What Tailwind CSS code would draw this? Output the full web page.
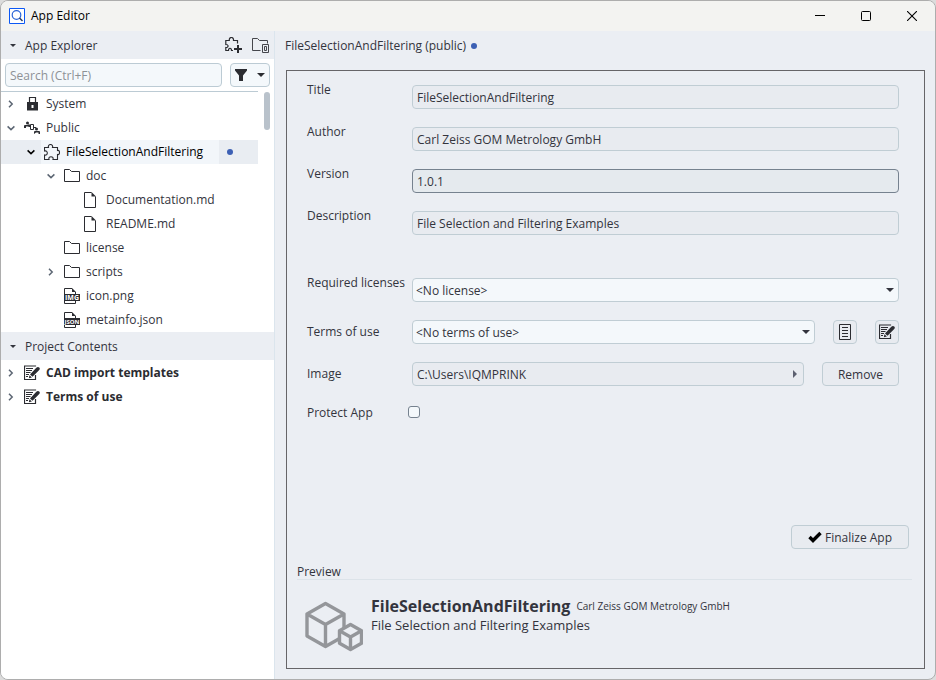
<!DOCTYPE html>
<html lang="en">
<head>
<meta charset="utf-8">
<meta name="viewport" content="width=device-width, initial-scale=1">
<title>App Editor</title>
<script src="https://cdn.jsdelivr.net/npm/@tailwindcss/browser@4"></script>
</head>
<body class="bg-[#dcdcdc]">
<svg class="hidden" aria-hidden="true">
  <symbol id="right" viewBox="0 0 8 8"><path d="M2 .8 5.2 4 2 7.2" fill="none" stroke="currentColor" stroke-width="1.5"/></symbol>
  <symbol id="down" viewBox="0 0 8 8"><path d="M.6 2.4 4 5.6 7.4 2.4" fill="none" stroke="currentColor" stroke-width="1.5"/></symbol>
  <symbol id="caret" viewBox="0 0 8 4"><path d="M0 0h8L4 4z" fill="currentColor"/></symbol>
  <symbol id="folder" viewBox="0 0 16 16"><path d="M.5 13.5v-12h5l2 2h8v10z" fill="none" stroke="currentColor"/></symbol>
  <symbol id="file" viewBox="0 0 16 16"><path d="M9.500 .5h-7v15h11V4.500" fill="none" stroke="currentColor"/><path d="M9.500 0v4.500H14z" fill="currentColor"/></symbol>
  <symbol id="puzzle" viewBox="0 0 16 16"><path d="M.5 3.500H4.500C4 2 4.700 .5 6.500 .5S9 2 8.500 3.500H13.500V6.500C15 6 15.500 7.200 15.500 8.500S15 11 13.500 10.500V15.500H9C9.500 13.600 8.500 12.800 7 12.800S4.500 13.600 5 15.500H.5V11C2.500 11.500 3.300 10.200 3.300 9S2.500 6.500 .5 7Z" fill="none" stroke="currentColor" stroke-width="1.100"/></symbol>
  <symbol id="edit" viewBox="0 0 16 16"><path d="M11.500 1.500V1H.5v13.500h11V10" fill="none" stroke="currentColor" stroke-width="1.200"/><path d="M2 3.500h7M2 5.500h6M2 7.500h4.500M2 9.500h3M2 11.500h2" stroke="currentColor" fill="none"/><path d="m6 9.500 6.300-6.800Q14 1.200 15.200 2.500q1.300 1.200-.2 2.700L8.500 11.800z" fill="currentColor"/><path d="m5.400 10.200 2.500 2.300-3 .8z" fill="currentColor"/></symbol>
</svg>
<div class="flex h-screen flex-col overflow-hidden rounded-lg border border-[#adadad] bg-[#ebeef3] font-['Open_Sans',sans-serif] text-xs leading-4 text-[#33343d]">
  <header class="flex h-[30px] shrink-0 items-center bg-[#f3f3f1] pl-2 text-black">
    <svg class="size-4" viewBox="0 0 16 16" fill="none"><path d="M.5.5h15v15H.5z" fill="#fff" stroke="#0c58f5"/><circle cx="7.500" cy="7" r="4.300" stroke="#2a65d8" stroke-width="1.200"/><path d="m10.500 10 3 3" stroke="#2a3a5a" stroke-width="1.400"/></svg>
    <h1 class="ml-[6px] flex-1">App Editor</h1>
    <button aria-label="Minimize" class="flex h-full w-[46px] items-center justify-center"><svg class="size-[10px]" viewBox="0 0 10 10"><path d="M0 4.500h10" stroke="#000"/></svg></button>
    <button aria-label="Maximize" class="flex h-full w-[46px] items-center justify-center"><svg class="size-[10px]" viewBox="0 0 10 10"><rect x=".5" y=".5" width="9" height="9" rx="1" fill="none" stroke="#000"/></svg></button>
    <button aria-label="Close" class="flex h-full w-[46px] items-center justify-center"><svg class="size-[10px]" viewBox="0 0 10 10"><path d="m0 0 10 10M10 0 0 10" stroke="#000" stroke-width="1.100"/></svg></button>
  </header>
  <div class="flex min-h-0 flex-1">
    <aside class="flex w-[274px] shrink-0 flex-col border-r border-[#dbe5ed] bg-white">
      <div class="flex h-7 shrink-0 items-center bg-[#ebeef3] pl-[9px] pr-[5px]">
        <svg class="h-[3px] w-[6px]"><use href="#caret"/></svg>
        <h2 class="ml-[9px] flex-1 pt-px">App Explorer</h2>
        <button aria-label="Create app" class="mr-[9px]"><svg class="h-4 w-[18px]" viewBox="0 0 18 16" fill="none"><path d="M8 13.500H6.500c0-3-3-3-3 0H.8v-3c3 .3 3-3.300 0-3V3.500h3.500C3.800-.5 9-.5 8.500 3.500H12.500V6.500" stroke="#2b2c31" stroke-width="1.200"/><path d="M13 8v8M9 12h8" stroke="#2b2c31" stroke-width="2"/></svg></button>
        <button aria-label="Create folder"><svg class="h-4 w-[17px]" viewBox="0 0 17 16" fill="none" stroke="#45464c"><path d="M8.500 13.500h-8v-12h5l2 2h8v3"/><path d="M10.500 7.500h6v8h-6zM12.500 9.500h2v4h-2z"/></svg></button>
      </div>
      <div class="flex shrink-0 gap-2 px-1 py-1">
        <input type="search" aria-label="Search" placeholder="Search (Ctrl+F)" class="h-6 min-w-0 flex-1 rounded border border-[#bccbd4] bg-[#f4f8fb] px-1 outline-none placeholder:text-[#8d9196]">
        <button aria-label="Filter" class="flex h-6 w-10 items-center justify-between rounded border border-[#bccbd4] bg-[#f4f8fb] pl-1 pr-1 text-[#2b2c31]">
          <svg class="h-3 w-3" viewBox="0 0 12 12"><path d="M0 0h12v1.500L8 6.500V12H4V6.500L0 1.500z" fill="currentColor"/></svg>
          <svg class="h-1 w-2"><use href="#caret"/></svg>
        </button>
      </div>
      <div class="flex h-[241px] shrink-0 justify-between pr-1">
        <ul class="w-[257px] border-t border-[#bccbd4] [&>li]:flex [&>li]:h-6 [&>li]:items-center">
          <li class="pl-[6px]"><svg class="size-2 text-[#5c6673]"><use href="#right"/></svg><svg class="ml-[9px] mr-[6px] size-4 text-[#2b2c31]" viewBox="0 0 16 16"><path d="M5.500 6.500V1.500h6v5" fill="none" stroke="currentColor" stroke-width="1.200"/><path d="M3 6h11v8.500H3zM7.500 9v3h2V9z" fill="currentColor" fill-rule="evenodd"/></svg>System</li>
          <li class="pl-[6px]"><svg class="size-2 text-[#5c6673]"><use href="#down"/></svg><svg class="ml-[9px] mr-[6px] size-4 text-[#2b2c31]" viewBox="0 0 16 16"><circle cx="3.500" cy="3" r="1.500" fill="currentColor"/><path d="M0 8V6q0-1 1-1h4q1 0 1 1v1H4.500V6.500H2V8zM10 14v-2q0-1 1-1h4q1 0 1 1v2h-1.500v-1.500H12zM4 4.500h2v1H4zM9 7h3v1H9z" fill="currentColor"/><path d="M6.500 4.500h3v5h-3z" fill="none" stroke="currentColor"/><circle cx="12.500" cy="9" r="1.500" fill="currentColor"/></svg>Public</li>
          <li class="bg-[#e9edf2] pl-[26px] text-black"><svg class="size-2"><use href="#down"/></svg><div class="ml-[6px] flex h-full w-[178px] items-center bg-[#f2f6fa] pl-[3px]"><svg class="size-4 text-[#2b2c31]"><use href="#puzzle"/></svg><span class="ml-[6px]">FileSelectionAndFiltering</span></div><span class="ml-2 size-[6px] rounded-full bg-[#3c60b4]"></span></li>
          <li class="pl-[46px]"><svg class="size-2 text-[#5c6673]"><use href="#down"/></svg><svg class="ml-[9px] mr-[6px] size-4 text-[#2b2c31]"><use href="#folder"/></svg>doc</li>
          <li class="pl-[81px]"><svg class="mr-2 size-4 text-[#2b2c31]"><use href="#file"/></svg>Documentation.md</li>
          <li class="pl-[81px]"><svg class="mr-2 size-4 text-[#2b2c31]"><use href="#file"/></svg>README.md</li>
          <li class="pl-[63px]"><svg class="mr-[6px] size-4 text-[#2b2c31]"><use href="#folder"/></svg>license</li>
          <li class="pl-[46px]"><svg class="size-2 text-[#5c6673]"><use href="#right"/></svg><svg class="ml-[9px] mr-[6px] size-4 text-[#2b2c31]"><use href="#folder"/></svg>scripts</li>
          <li class="pl-[63px]"><svg class="mr-[6px] size-4 text-[#2b2c31]" viewBox="0 0 16 16"><path d="M8 .5H.5v15h11V4" fill="none" stroke="currentColor"/><path d="M8 0v4h4zM0 6h16v7H0z" fill="currentColor"/><text x="8" y="12" text-anchor="middle" font-size="7" font-weight="700" fill="#fff">IMG</text></svg>icon.png</li>
          <li class="pl-[63px]"><svg class="mr-[6px] size-4 text-[#2b2c31]" viewBox="0 0 16 16"><path d="M8 .5H.5v15h11V4" fill="none" stroke="currentColor"/><path d="M8 0v4h4zM0 6h16v7H0z" fill="currentColor"/><text x="8" y="11.700" text-anchor="middle" font-size="6" font-weight="700" fill="#fff">JSON</text></svg>metainfo.json</li>
        </ul>
        <div class="mt-px h-[38px] w-[6px] rounded-full bg-[#b9c2cb]"></div>
      </div>
      <div class="flex h-7 shrink-0 items-center bg-[#ebeef3] pl-[9px]">
        <svg class="h-[3px] w-[6px]"><use href="#caret"/></svg>
        <h2 class="ml-[9px] pt-px">Project Contents</h2>
      </div>
      <ul class="pt-px font-bold text-[#2b2c31] [&>li]:flex [&>li]:h-6 [&>li]:items-center [&>li]:pl-[6px]">
        <li><svg class="size-2 text-[#5c6673]"><use href="#right"/></svg><svg class="ml-[9px] mr-[6px] size-4"><use href="#edit"/></svg>CAD import templates</li>
        <li><svg class="size-2 text-[#5c6673]"><use href="#right"/></svg><svg class="ml-[9px] mr-[6px] size-4"><use href="#edit"/></svg>Terms of use</li>
      </ul>
    </aside>
    <main class="flex min-w-0 flex-1 flex-col pb-[10px] pl-[11px] pr-[10px]">
      <div class="-ml-px flex h-[39px] shrink-0 items-center gap-[5px] pb-[9px]">
        <h2>FileSelectionAndFiltering (public)</h2><span class="size-[6px] rounded-full bg-[#3c60b4]"></span>
      </div>
      <form class="flex min-h-0 flex-1 flex-col border border-[#666568] pt-[11px]">
        <div class="flex flex-col gap-[15px] pl-5 pr-[25px]">
          <div class="flex items-start"><label for="title" class="w-[105px] shrink-0">Title</label><input id="title" readonly value="FileSelectionAndFiltering" class="mt-[3px] h-6 min-w-0 flex-1 rounded border border-[#c0cdd4] bg-[#e8ebf0] px-1 pt-px outline-none"></div>
          <div class="flex items-start"><label for="author" class="w-[105px] shrink-0">Author</label><input id="author" readonly value="Carl Zeiss GOM Metrology GmbH" class="mt-[3px] h-6 min-w-0 flex-1 rounded border border-[#c0cdd4] bg-[#e8ebf0] px-1 pt-px outline-none"></div>
          <div class="flex items-start"><label for="version" class="w-[105px] shrink-0">Version</label><input id="version" readonly value="1.0.1" class="mt-[3px] h-6 min-w-0 flex-1 rounded border border-[#76828f] bg-[#e5eaee] px-1 pt-px outline-none"></div>
          <div class="flex items-start"><label for="description" class="w-[105px] shrink-0">Description</label><input id="description" readonly value="File Selection and Filtering Examples" class="mt-[3px] h-6 min-w-0 flex-1 rounded border border-[#c0cdd4] bg-[#e8ebf0] px-1 pt-px outline-none"></div>
        </div>
        <div class="mt-10 flex flex-col gap-[18px] pl-5 pr-[25px]">
          <div class="flex items-start"><label for="licenses" class="w-[105px] shrink-0">Required licenses</label>
            <div class="relative mt-[3px] min-w-0 flex-1"><select id="licenses" class="block h-6 w-full appearance-none rounded border border-[#c0cdd4] bg-[#f4f8fb] px-[3px] pt-px outline-none"><option>&lt;No license&gt;</option></select><svg class="pointer-events-none absolute right-[5px] top-[10px] h-1 w-2"><use href="#caret"/></svg></div>
          </div>
          <div class="flex items-center"><label for="terms" class="w-[105px] shrink-0 pb-px">Terms of use</label>
            <div class="relative min-w-0 flex-1"><select id="terms" class="block h-6 w-full appearance-none rounded border border-[#c0cdd4] bg-[#f4f8fb] px-[3px] pt-px outline-none"><option>&lt;No terms of use&gt;</option></select><svg class="pointer-events-none absolute right-[5px] top-[10px] h-1 w-2"><use href="#caret"/></svg></div>
            <button type="button" aria-label="View terms" class="ml-[18px] flex size-6 items-center justify-center rounded border border-[#c0cdd4] bg-[#e8ebf0] text-[#2b2c31]"><svg class="size-4" viewBox="0 0 16 16" fill="none" stroke="currentColor"><path d="M2.500.5h11v15h-11zM5 3.500h6M5 6.500h6M5 9.500h6M5 12.500h6"/></svg></button>
            <button type="button" aria-label="Edit terms" class="ml-[18px] flex size-6 items-center justify-center rounded border border-[#c0cdd4] bg-[#e8ebf0] text-[#2b2c31]"><svg class="size-4"><use href="#edit"/></svg></button>
          </div>
          <div class="flex items-center"><label for="image" class="w-[105px] shrink-0 pb-px">Image</label>
            <div class="relative min-w-0 flex-1"><input id="image" readonly value="C:\Users\IQMPRINK" class="block h-6 w-full rounded border border-[#c0cdd4] bg-[#e8ebf0] px-1 pt-px outline-none"><svg class="pointer-events-none absolute right-[7px] top-2 h-2 w-1" viewBox="0 0 4 8"><path d="M0 0v8l4-4z" fill="#5c6070"/></svg></div>
            <button type="button" class="ml-[18px] h-6 w-[77px] rounded border border-[#c0cdd4] bg-[#e8ebf0] pt-px">Remove</button>
          </div>
          <div class="flex items-start"><label for="protect" class="w-[101px] shrink-0 pt-px">Protect App</label><input id="protect" type="checkbox" class="mt-[2px] size-3 appearance-none rounded-[3px] border border-[#76828f] bg-[#f4f8fb]"></div>
        </div>
        <div class="flex-1"></div>
        <button type="button" class="mr-[15px] flex h-6 w-[118px] shrink-0 items-center justify-center gap-[3px] self-end rounded border border-[#c0cdd4] bg-[#e8ebf0]"><svg class="h-3 w-[14px]" viewBox="0 0 14 12"><path d="m1.500 6 3.500 3.500L12.500 2" fill="none" stroke="#000" stroke-width="3.400"/></svg><span class="pt-px">Finalize App</span></button>
        <section class="mt-4 shrink-0 pl-[10px] pr-3">
          <h3 class="border-b border-[#dce3e9] leading-[14px]">Preview</h3>
          <div class="flex h-[88px] pl-2 pt-[21px]">
            <svg class="h-[52px] w-[58px] shrink-0" viewBox="0 0 58 52" fill="none" stroke="#94969a" stroke-width="3.400" stroke-linejoin="round"><path d="M20.500 2.500 39 13v22L20.500 45.500 2 35V13zM2 13l18.500 10.500L39 13M20.500 23.500v22"/><path d="m45.500 23.500 11 6.300v12.500l-11 6.200-11-6.200V29.800z" fill="#ebeef3"/><path d="m34.500 29.800 11 6.200 11-6.200M45.500 36v12.500"/></svg>
            <div class="-mt-[5px] ml-2">
              <div class="flex items-center gap-[6px]"><h4 class="text-base font-bold leading-5">FileSelectionAndFiltering</h4><span class="text-[10px]">Carl Zeiss GOM Metrology GmbH</span></div>
              <p class="text-[13px] leading-[18px]">File Selection and Filtering Examples</p>
            </div>
          </div>
        </section>
      </form>
    </main>
  </div>
</div>
</body>
</html>
